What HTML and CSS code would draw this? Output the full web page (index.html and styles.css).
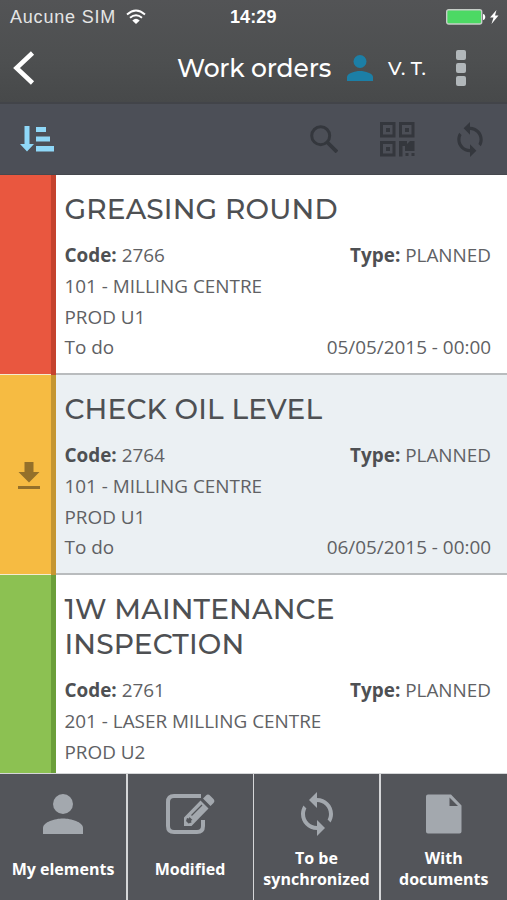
FILE: index.html
```html
<!DOCTYPE html>
<html lang="en">
<head>
	<title>Work orders</title>
	<meta charset="utf-8">
	<meta name="viewport" content="width=device-width, initial-scale=1">
	<link rel="stylesheet" href="styles.css">
</head>
<body>
<svg class="defs">
	<symbol id="person" viewBox="0 0 40 40">
		<circle cx="20" cy="10" r="10"/>
		<path d="M0 40v-6c0-6 12-9.500 20-9.500s20 3.500 20 9.500v6z"/>
	</symbol>
	<symbol id="sync" viewBox="2 1 20 22">
		<path d="M12 4V1L8 5l4 4V6c3.310 0 6 2.690 6 6 0 1.010-.25 1.970-.7 2.800l1.460 1.460C19.540 15.030 20 13.570 20 12c0-4.420-3.580-8-8-8zm0 14c-3.310 0-6-2.690-6-6 0-1.010.25-1.970.7-2.800L5.240 7.740C4.460 8.970 4 10.430 4 12c0 4.420 3.580 8 8 8v3l4-4-4-4v3z"/>
	</symbol>
</svg>
<div id="header">
	<div class="status">
		<span class="carrier">Aucune SIM</span>
		<svg class="wifi" viewBox="0 0 20 16">
			<path d="M1 5.500Q10-2.500 19 5.500M4 8.800Q10 3.600 16 8.800" fill="none" stroke="#fff" stroke-width="1.900"/>
			<path d="M6.300 11.500Q10 8.200 13.700 11.500L10 15z" fill="#fff"/>
		</svg>
		<span class="clock">14:29</span>
		<svg class="battery" viewBox="0 0 53 16">
			<rect x=".7" y=".7" width="35" height="14.300" rx="2" fill="#4cd964" stroke="#c6cdc8" stroke-width="1.400"/>
			<path d="M37 5c3 0 3 6 0 6z" fill="#fff"/>
			<path d="M50.500 1L44 8.500h3.500L45.500 15l7-8.500H49z" fill="#fff"/>
		</svg>
	</div>
	<div class="titlebar">
		<svg class="back" viewBox="0 0 22 34"><path d="M19.500 2L3.500 17l16 15" fill="none" stroke="#fff" stroke-width="4.600"/></svg>
		<h1>Work orders</h1>
		<svg class="user"><use href="#person"/></svg>
		<span class="initials">V. T.</span>
		<div class="more"><i></i><i></i><i></i></div>
	</div>
</div>
<div id="toolbar">
	<svg class="sort" viewBox="0 0 34 26">
		<path d="M4.500 0h5v18H14l-7 7.500L0 18h4.500zM16 1h10v5H16zM16 10.500h14v5H16zM16 20h18v5.500H16z"/>
	</svg>
	<svg class="search" viewBox="0 0 28 28">
		<circle cx="10.700" cy="10.700" r="9" fill="none" stroke="#34373d" stroke-width="3"/>
		<path d="M17 17l10 10" stroke="#34373d" stroke-width="3.800"/>
	</svg>
	<svg class="qr" viewBox="0 0 35 35">
		<g fill="none" stroke="#34373d" stroke-width="3">
			<path d="M1.500 1.500h12.500v12.500H1.500zM20.500 1.500H33v12.500H20.500zM1.500 20.500h12.500V33H1.500z"/>
		</g>
		<path d="M6 6h4v4H6zM25 6h4v4h-4zM6 25h4v4H6zM19 19h8v3l3-3h4.500v10H25v-5h-2.500v10.500H19zM25.500 31h3v3h-3zM31.500 31h3v3h-3z"/>
	</svg>
	<svg class="refresh"><use href="#sync"/></svg>
</div>
<ul id="orders">
	<li>
		<div class="flag red"></div>
		<div class="order">
			<h2>GREASING ROUND</h2>
			<p><span><b>Code:</b> 2766</span><span><b>Type:</b> PLANNED</span></p>
			<p>101 - MILLING CENTRE</p>
			<p>PROD U1</p>
			<p><span>To do</span><span>05/05/2015 - 00:00</span></p>
		</div>
	</li>
	<li class="even">
		<div class="flag orange">
			<svg class="download" viewBox="0 0 22 27"><path d="M6.500 0h9v10H21.500L11 20.500.5 10h6zM0 24h22v3H0z"/></svg>
		</div>
		<div class="order">
			<h2>CHECK OIL LEVEL</h2>
			<p><span><b>Code:</b> 2764</span><span><b>Type:</b> PLANNED</span></p>
			<p>101 - MILLING CENTRE</p>
			<p>PROD U1</p>
			<p><span>To do</span><span>06/05/2015 - 00:00</span></p>
		</div>
	</li>
	<li>
		<div class="flag green"></div>
		<div class="order">
			<h2>1W MAINTENANCE<br>INSPECTION</h2>
			<p><span><b>Code:</b> 2761</span><span><b>Type:</b> PLANNED</span></p>
			<p>201 - LASER MILLING CENTRE</p>
			<p>PROD U2</p>
		</div>
	</li>
</ul>
<div id="tabs">
	<div class="tab">
		<svg class="icon"><use href="#person"/></svg>
		<span>My elements</span>
	</div>
	<div class="tab">
		<svg class="icon edit" viewBox="0 0 49 40">
			<path d="M35 2H8Q2 2 2 8v24q0 6 6 6h23q6 0 6-6v-6" fill="none" stroke="#a3a8ae" stroke-width="4"/>
			<path d="M18 23.500L34.500 6.500l8 8-17 17.500H18zM37 4.500L40 1.500q2-2 4.500.5l2.500 2.500q2.500 2.500.5 4.500l-3 3z"/>
			<path d="M25.500 21.500L36 11" stroke="#53555a" stroke-width="1.200"/>
			<path d="M21 24l2 .500.500-1.500 3 3-1.500.500.500 2-3 1-2.500-2.500z" fill="#53555a"/>
		</svg>
		<span>Modified</span>
	</div>
	<div class="tab">
		<svg class="icon synced"><use href="#sync"/></svg>
		<span>To be<br>synchronized</span>
	</div>
	<div class="tab">
		<svg class="icon doc" viewBox="0 0 36 39">
			<path d="M2 0h23l10.500 11v26q0 2-2 2H2q-2 0-2-2V2q0-2 2-2zM23.500 3v8.500H32z" fill-rule="evenodd"/>
		</svg>
		<span>With<br>documents</span>
	</div>
</div>
</body>
</html>
```
FILE: styles.css
```css
body {
	margin:0;
	height:900px;
	display:flex;
	flex-direction:column;
	overflow:hidden;
	background-color:#fff;
	color:#606164;
	font-family:"Open Sans", "Noto Sans", sans-serif;
}
svg {
	display:block;
	flex:none;
}
.defs {
	position:absolute;
	width:0;
	height:0;
}
#header {
	height:102px;
	flex:none;
	background:linear-gradient(#535456, #4d4f50 60%, #47494a);
	border-bottom:2px solid #424449;
	color:#fff;
}
.status {
	display:flex;
	align-items:center;
	height:34px;
	font-family:"Liberation Sans", Arial, sans-serif;
	font-size:18px;
}
.carrier {
	width:106px;
	margin-left:10px;
	color:#e4e5e5;
	letter-spacing:0.8px;
	white-space:nowrap;
}
.wifi {
	width:20px;
	height:16px;
	margin-left:10px;
}
.clock {
	margin-left:84px;
	width:60px;
	font-weight:bold;
	letter-spacing:0.1px;
}
.battery {
	width:53px;
	height:16px;
	margin-left:156px;
}
.titlebar {
	display:flex;
	align-items:center;
	height:68px;
}
.back {
	width:22px;
	height:34px;
	margin-left:13px;
}
#header h1 {
	width:160px;
	margin:0 0 0 142px;
	font-family:Montserrat, Lato, sans-serif;
	font-size:25px;
	font-weight:500;
	letter-spacing:-0.15px;
	white-space:nowrap;
}
.user {
	width:26px;
	height:26px;
	margin-left:10px;
	fill:#1c7fa6;
}
.initials {
	width:52px;
	margin-left:15px;
	font-family:Montserrat, Lato, sans-serif;
	font-size:19px;
	font-weight:500;
	letter-spacing:0.2px;
	white-space:nowrap;
}
.more {
	display:flex;
	flex-direction:column;
	gap:3px;
	margin-left:16px;
}
.more i {
	width:10px;
	height:10px;
	border-radius:2px;
	background:#b1b7ba;
}
#toolbar {
	display:flex;
	align-items:center;
	height:70px;
	flex:none;
	background:#4c4f57;
	border-bottom:1px solid #45484e;
	fill:#34373d;
}
.sort {
	width:34px;
	height:26px;
	margin-left:20px;
	fill:#8fd8f8;
}
.search {
	width:28px;
	height:28px;
	margin-left:256px;
}
.qr {
	width:35px;
	height:35px;
	margin-left:42px;
}
.refresh {
	width:32px;
	height:35px;
	margin-left:39px;
}
#orders {
	flex:1;
	min-height:0;
	overflow:hidden;
	margin:0;
	padding:0;
	list-style:none;
}
#orders li {
	display:flex;
	height:200px;
}
#orders li.even {
	background:#ebf0f3;
}
#orders li:last-child {
	height:235px;
}
.flag {
	display:flex;
	align-items:center;
	justify-content:center;
	width:51px;
	flex:none;
	border-right:5px solid;
	box-shadow:inset 0 -1px #f5ecd0;
}
.red { background:#e9573f; border-color:#c5432e; }
.orange { background:#f6bb42; border-color:#c59631; }
.green { background:#8cc152; border-color:#6b9f39; }
.download {
	width:22px;
	height:27px;
	margin-left:6px;
	fill:#94702a;
}
.order {
	flex:1;
	padding:17px 16px 0 8.5px;
	border-bottom:2px solid #b9bcbe;
}
.order h2 {
	margin:0 0 13.4px;
	font-family:Montserrat, Lato, sans-serif;
	font-size:28px;
	font-weight:500;
	line-height:35px;
	letter-spacing:0.15px;
	color:#4e5053;
	white-space:nowrap;
}
.order p {
	display:flex;
	justify-content:space-between;
	margin:0;
	font-size:18.9px;
	line-height:30.6px;
	white-space:nowrap;
}
.order b {
	color:#4e5053;
}
#tabs {
	display:grid;
	grid-template-columns:126px 125px 125px 1fr;
	gap:1.5px;
	height:126px;
	flex:none;
	border-top:1px solid #d5d6d8;
	background:#d5d6d8;
}
.tab {
	display:flex;
	flex-direction:column;
	align-items:center;
	background:#53555a;
	color:#fff;
	font-size:16px;
	font-weight:bold;
	line-height:21px;
	text-align:center;
}
.tab span {
	display:flex;
	align-items:center;
	height:44px;
	margin-top:13px;
}
.icon {
	width:40px;
	height:40px;
	margin-top:20px;
	fill:#a3a8ae;
}
.edit { width:49px; }
.synced { height:46px; margin:17px 0 -3px; }
.doc { width:36px; }
```
